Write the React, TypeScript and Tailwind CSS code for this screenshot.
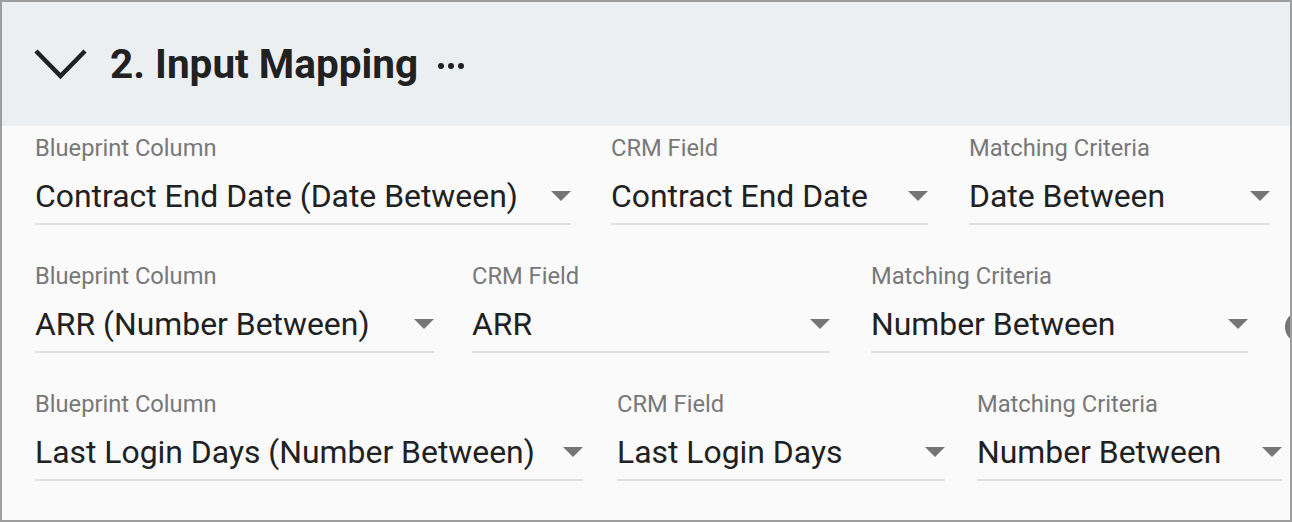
type Field = {
  label: string;
  value: string;
  width: string;
  gap: string;
};

const rows: { fields: Field[]; removable?: boolean }[] = [
  {
    fields: [
      { label: "Blueprint Column", value: "Contract End Date (Date Between)", width: "w-[536px]", gap: "" },
      { label: "CRM Field", value: "Contract End Date", width: "w-[317px]", gap: "ml-[40px]" },
      { label: "Matching Criteria", value: "Date Between", width: "w-[301px]", gap: "ml-[41px]" },
    ],
  },
  {
    fields: [
      { label: "Blueprint Column", value: "ARR (Number Between)", width: "w-[399px]", gap: "" },
      { label: "CRM Field", value: "ARR", width: "w-[358px]", gap: "ml-[38px]" },
      { label: "Matching Criteria", value: "Number Between", width: "w-[377px]", gap: "ml-[41px]" },
    ],
    removable: true,
  },
  {
    fields: [
      { label: "Blueprint Column", value: "Last Login Days (Number Between)", width: "w-[548px]", gap: "" },
      { label: "CRM Field", value: "Last Login Days", width: "w-[328px]", gap: "ml-[34px]" },
      { label: "Matching Criteria", value: "Number Between", width: "w-[305px]", gap: "ml-[32px]" },
    ],
  },
];

function Chevron() {
  return (
    <svg width="55" height="33" viewBox="0 0 55 33" fill="none" className="shrink-0">
      <path d="M3 3 L27.5 28 L52 3" stroke="#212121" strokeWidth="4.5" />
    </svg>
  );
}

function SelectField({ field }: { field: Field }) {
  return (
    <div className={`flex shrink-0 flex-col ${field.width} ${field.gap}`}>
      <span className="h-6 text-[23.7px] leading-6 whitespace-nowrap text-[#787878]">{field.label}</span>
      <div className="mt-[17px] flex h-[38px] items-center justify-between">
        <span className="text-[31.9px] leading-[38px] whitespace-nowrap text-[#212121]">{field.value}</span>
        <svg width="20" height="10" viewBox="0 0 20 10" className="shrink-0">
          <path d="M0 0 H20 L10 10 Z" fill="#757575" />
        </svg>
      </div>
      <div className="mt-2 h-[2px] bg-[#e0e0e0]" />
    </div>
  );
}

export default function App() {
  return (
    <div
      className="flex h-[522px] w-[1292px] flex-col overflow-hidden border-2 border-[#9e9e9e] bg-[#fafafa]"
      style={{ fontFamily: "Roboto, 'Liberation Sans', sans-serif" }}
    >
      <header className="flex h-[124px] shrink-0 items-center bg-[#eceff2] pl-[31px]">
        <Chevron />
        <h2 className="ml-[22px] text-[40.5px] leading-none font-bold text-[#212121]">2. Input Mapping</h2>
        <div className="ml-[20px] flex items-center gap-[4px] pt-1">
          <span className="h-[6px] w-[6px] rounded-full bg-[#212121]" />
          <span className="h-[6px] w-[6px] rounded-full bg-[#212121]" />
          <span className="h-[6px] w-[6px] rounded-full bg-[#212121]" />
        </div>
      </header>
      <div className="flex flex-col gap-[39px] px-[33px] pt-[10px]">
        {rows.map((row, i) => (
          <div key={i} className="flex items-start">
            {row.fields.map((f) => (
              <SelectField key={f.label} field={f} />
            ))}
            {row.removable && (
              <span className="mt-[47px] ml-[37px] h-8 w-8 shrink-0 rounded-full bg-[#757575]" />
            )}
          </div>
        ))}
      </div>
    </div>
  );
}
